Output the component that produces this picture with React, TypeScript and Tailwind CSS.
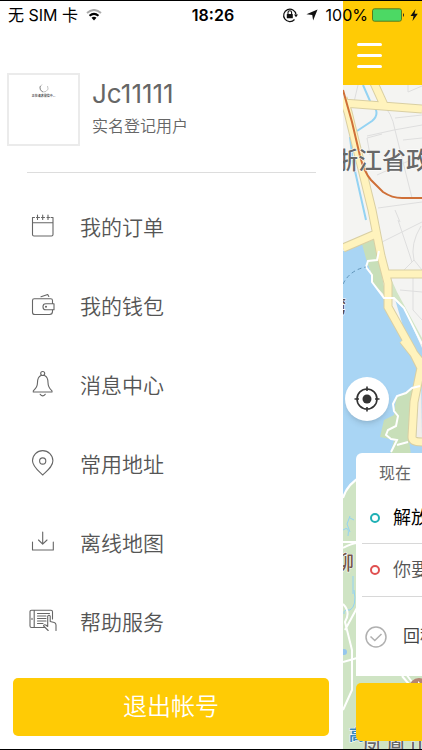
import React from 'react';

const ink = {
  fill: 'none',
  stroke: '#666666',
  strokeWidth: 1.1,
  strokeLinecap: 'round',
  strokeLinejoin: 'round',
} as const;

const CalendarIcon = () => (
  <svg viewBox="0 0 28 28" className="size-7" {...ink} aria-hidden="true">
    <path d="M5.500 5.500H3.500V22.500Q3.500 24 5 24H22.500Q24 24 24 22.500V5.500H22M3.500 10.800H24M8.500 3V7.500M13.700 3V7.500M19 3V7.500M7.500 5.500H10.500M12.500 5.500H15.500M18 5.500H20.500" />
  </svg>
);

const WalletIcon = () => (
  <svg viewBox="0 0 28 28" className="size-7" {...ink} aria-hidden="true">
    <path d="M23.500 12.500V9.500Q23.500 7.700 21.700 7.700H5.300Q3.500 7.700 3.500 9.500V21.200Q3.500 23.500 5.800 23.500H20.500Q23.500 23.500 23.500 20.500V19" />
    <path d="M25 12.700H16.800Q14 12.700 14 15.500V16Q14 18.800 16.800 18.800H25Z" />
    <path d="M12 5.800L18.700 3.500L19.800 5.500" />
    <circle cx="17" cy="15.700" r=".5" />
  </svg>
);

const BellIcon = () => (
  <svg viewBox="0 0 28 28" className="size-7" {...ink} aria-hidden="true">
    <circle cx="13.700" cy="3.500" r="2" />
    <path d="M12 5.500C9 6.800 8.500 9 8.500 12.500C8.500 17 6.800 18.700 4.300 20.800V22H23V20.800C20.500 18.700 19 17 19 12.500C19 9 18.500 6.800 15.500 5.500M11.200 24.300Q13.700 27.500 16.200 24.300" />
  </svg>
);

const PinIcon = () => (
  <svg viewBox="0 0 28 28" className="size-7" {...ink} aria-hidden="true">
    <path d="M13.700 26C9 21.500 3.500 17.500 3.500 11.800A10.200 10.200 0 0 1 23.900 11.800C23.900 17.500 18.500 21.500 13.700 26Z" />
    <circle cx="13.700" cy="12" r="3.100" />
  </svg>
);

const DownloadIcon = () => (
  <svg viewBox="0 0 28 28" className="size-7" {...ink} aria-hidden="true">
    <path d="M13.700 4V16M9.500 12L13.700 16.200L18 12M3.500 14V22H24.300V14" />
  </svg>
);

const HelpIcon = () => (
  <svg viewBox="0 0 28 28" className="size-7" {...ink} aria-hidden="true">
    <path d="M15.500 20.500H2.500Q1 20.500 1 19V4.800Q1 3.300 2.500 3.300H22Q23.500 3.300 23.500 4.800V12M5.200 3.500V20.300M3 11.200V12.500M8.500 6.500H20.500M8.500 9H17M8.500 11.500H17M8.500 14H17M8.500 16.500H14" />
    <path d="M19.200 23.500L14.500 18.800Q15.500 17 17.500 18.500L18.700 19.500V9Q20 7.500 21.200 9V14.500L25.200 15.500Q27 16 27 18V23.500" fill="#ffffff" />
  </svg>
);

const menuItems = [
  { label: '我的订单', Icon: CalendarIcon },
  { label: '我的钱包', Icon: WalletIcon },
  { label: '消息中心', Icon: BellIcon },
  { label: '常用地址', Icon: PinIcon },
  { label: '离线地图', Icon: DownloadIcon },
  { label: '帮助服务', Icon: HelpIcon },
];

const StatusBar = () => (
  <div className="absolute inset-x-0 top-0 z-20 grid h-7 grid-cols-3 items-center pr-1 pl-2 text-base text-black">
    <div className="flex items-center gap-2 whitespace-nowrap">
      <span>无 SIM 卡</span>
      <svg viewBox="0 0 16 12" className="h-3 w-4" fill="none" strokeWidth="2" aria-hidden="true">
        <path d="M1 4Q8-2 15 4" stroke="#aaaaaa" />
        <path d="M3.500 6.800Q8 3 12.500 6.800" stroke="#000000" />
        <path d="M5.500 8.800Q8 6.800 10.500 8.800L8 11.500Z" fill="#000000" />
      </svg>
    </div>
    <span className="text-center font-semibold">18:26</span>
    <div className="flex items-center justify-end gap-1">
      <svg viewBox="0 0 16 16" className="mr-1 size-4 shrink-0" fill="none" stroke="#111111" aria-hidden="true">
        <path d="M12.500 12.500A6.200 6.200 0 1 1 14 7.500" strokeWidth="1.200" />
        <path d="M12 7.500H16L14 10.200Z" fill="#111111" stroke="none" />
        <rect x="4.800" y="7" width="6" height="4.300" rx=".5" fill="#111111" stroke="none" />
        <path d="M6 7V5.500A1.800 1.800 0 0 1 9.600 5.500V7" strokeWidth="1.100" />
      </svg>
      <svg viewBox="0 0 14 14" className="mr-1 size-3 shrink-0" aria-hidden="true">
        <path d="M13.500 .5L8.300 13.500L7.300 7L.5 6Z" fill="#111111" />
      </svg>
      <span>100%</span>
      <svg viewBox="0 0 34 14" className="h-3.5 w-[34px] shrink-0" aria-hidden="true">
        <rect x=".5" y=".8" width="29" height="12.400" rx="2" fill="#4cd964" stroke="#5b7a1c" />
        <path d="M31 5Q33 7 31 9Z" fill="#222222" />
      </svg>
      <svg viewBox="0 0 8 14" className="h-3.5 w-2 shrink-0" aria-hidden="true">
        <path d="M5.500 1L.5 8H3.500L2.500 13L7.800 5.800H4.500Z" fill="#111111" />
      </svg>
    </div>
  </div>
);

// Streets around the lake, drawn bottom to top: land, water, parks, roads, labels
const CityMap = () => (
  <svg
    viewBox="343 85 79 664"
    preserveAspectRatio="xMinYMin slice"
    className="absolute inset-0 size-full"
    aria-hidden="true"
  >
    <rect x="343" y="85" width="79" height="664" fill="#f4f4f2" />
    <g fill="none" stroke="#dedede" strokeWidth="1">
      <path d="M358 85L354 102M381 103Q392 112 395 130L412 198M367 136L394 130L422 125M370 155L367 138L382 134M395 118L422 115M377 175L422 155M378 208L422 202M395 210L400 222M408 85V92L422 86M403 140L422 138" />
      <path d="M382 242L422 222M398 220L412 262M421 226Q410 244 414 260L422 270M414 260L402 272M413 276V310L422 320M400 290L422 292" />
    </g>

    <path d="M343 251L363 244L368 262L374 284L386 300L422 375V500H343Z" fill="#a9d5f4" />
    <path d="M362 244L375 239L380 265L386 297L372 282L371 272L367 262Z" fill="#c8dfb9" />
    <path d="M388 272L392 297L402 306L422 345V338L397 292Z" fill="#d2e5c6" />
    <path d="M395 299L404 308L422 348V362L404 330Z" fill="#a9d5f4" />
    <path d="M421 365L418 400L416 439H422Z" fill="#f1eeea" />
    <path d="M396 398L405 392L414 389L409 440L411 455H390L394 440L380 437L384 420L394 415Z" fill="#c8dfb9" />
    <path d="M343 498Q347 484 362 476V749H343Z" fill="#cfe4c4" />
    <path d="M343 670H422V749H343Z" fill="#cfe4c4" />

    <g fill="none" stroke="#94d3f3" strokeWidth="2">
      <path d="M363 85L370 101L376 110Q378 116 372 121L357 131M350 137L353 162L366 220M371 220L375 240" />
      <path d="M350 516L347 524L350 532M350 518L354 520M343 530Q350 525 348 536M354 590Q357 606 350 610Q343 609 344 614M353 576V594" strokeWidth="1" />
    </g>
    <circle cx="344" cy="652" r="3" fill="#95c6ed" />

    <g fill="none" stroke="#d9cfa3" strokeWidth="9">
      <path d="M343 103L422 109M374 83L384 105M343 98L348 112L372 210L381 256L388 283V307L412 350L421 368L414 402L412 437Q412 442 422 442M343 248L378 233M387 274H422M403 340L422 364" />
    </g>
    <g fill="none" stroke="#fff3bd" strokeWidth="7">
      <path d="M343 103L422 109M374 83L384 105M343 98L348 112L372 210L381 256L388 283V307L412 350L421 368L414 402L412 437Q412 442 422 442M343 248L378 233M387 274H422M403 340L422 364" />
    </g>
    <path d="M343 90L352 122L360 156Q364 172 371 180L383 192Q392 198 402 198H422" fill="none" stroke="#cf7038" strokeWidth="2" />

    <g fill="none" stroke="#ffffff" strokeWidth="2">
      <path d="M379 251L377 260L368 261L366 267L372 275V282L384 298H394L404 308L422 344" />
      <path d="M420 386L412 388L406 393L397 396L393 404L394 411L398 416L396 426L388 430L386 435L391 439L397 440L391 452M397 445L408 442" />
      <path d="M343 498Q347 484 362 476M343 542H357M343 548Q352 543 358 543M343 604Q351 612 345 622L352 650V690L343 710M343 662L357 658M345 630L358 606M402 676L414 690M406 674L418 690" />
    </g>
    <path d="M343 284Q350 270 366 267" fill="none" stroke="#6195ba" strokeDasharray="4 3" />
    <circle cx="419" cy="688" r="10" fill="#b48573" />
    <path d="M418 681L423 686L418 689Z" fill="#ffffff" />

    <g stroke="#ffffff" strokeWidth="1" paintOrder="stroke">
      <text x="334" y="169" fontSize="24" fontWeight="500" fill="#686868">浙江省政</text>
      <text x="328" y="313" fontSize="18" fontWeight="500" fill="#5c4b48">湾</text>
      <text x="334" y="570" fontSize="20" fontWeight="500" fill="#745749">柳</text>
      <text x="349" y="740" fontSize="15" fontWeight="700" fill="#3688bd">高</text>
      <text x="362 386 410" y="755" fontSize="20" fontWeight="500" fill="#686868">凤凰山</text>
    </g>
  </svg>
);

const Drawer = () => (
  <aside className="flex min-w-0 flex-1 flex-col bg-white pt-[72px] pb-[13px] text-[#666666]">
    <header className="flex gap-3 pl-[7px]">
      <div className="flex size-[73px] shrink-0 flex-col items-center border-2 border-[#ebebeb] pt-2">
        <svg viewBox="0 0 10 10" className="size-2.5" fill="none" strokeWidth=".7" aria-hidden="true">
          <path d="M3 1.500A4 4 0 1 0 8.500 3" stroke="#aaaaaa" />
          <path d="M1.500 3A4 4 0 0 0 4 8.800" stroke="#777777" />
        </svg>
        <span className="text-[3px] leading-[6px] text-black">正在请求微信中...</span>
      </div>
      <div className="pt-[5px]">
        <h1 className="text-[26px] leading-8 font-normal">Jc11111</h1>
        <p className="mt-1 text-base leading-6 font-[350]">实名登记用户</p>
      </div>
    </header>

    <hr className="mt-[26px] mr-[27px] ml-[27px] border-[#dddddd]" />

    <nav className="mt-[15px]">
      <ul>
        {menuItems.map(({ label, Icon }) => (
          <li key={label}>
            <a href="#" className="flex h-[79px] items-center gap-[23px] pl-[29px] text-[21px] text-[#555555]">
              <span className="pb-1">
                <Icon />
              </span>
              <span className="font-[350]">{label}</span>
            </a>
          </li>
        ))}
      </ul>
    </nav>

    <button
      type="button"
      className="mt-auto mr-[14px] ml-[13px] h-[58px] rounded-[5px] bg-[#ffcb05] text-2xl font-[350] text-white"
    >
      退出帐号
    </button>
  </aside>
);

const BookingCard = () => (
  <section className="w-80 rounded-t-md bg-white pl-[6px] text-lg">
    <div className="flex h-10 items-center pl-[17px] text-base text-[#666666]">现在</div>
    <button type="button" className="flex h-[51px] w-full items-center gap-[13px] border-b border-[#d8d8d8] pl-2 text-black">
      <span className="size-2.5 rounded-full border-2 border-[#1fb0b5]" />
      解放
    </button>
    <button type="button" className="flex h-[53px] w-full items-center gap-[13px] border-b border-[#d8d8d8] pl-2 font-[350] text-[#555555]">
      <span className="size-2.5 rounded-full border-2 border-[#e05050]" />
      你要
    </button>
    <button type="button" className="flex h-[79px] w-full items-center gap-4 pl-[3px] text-[17px] text-[#444444]">
      <svg viewBox="0 0 22 22" className="size-[22px]" fill="none" stroke="#b0b0b0" strokeWidth="1.500" aria-hidden="true">
        <circle cx="11" cy="11" r="10" />
        <path d="M5.500 10.500L9.800 14.500L16.500 8" />
      </svg>
      回程
    </button>
  </section>
);

const MapPane = () => (
  <main className="flex w-[79px] shrink-0 flex-col overflow-hidden">
    <header className="h-[84px] shrink-0 bg-[#ffcb05] pt-[38px] pl-3">
      <button type="button" aria-label="菜单" className="flex h-8 w-7 flex-col items-center justify-center gap-2">
        <span className="h-[3px] w-[25px] rounded-full bg-white" />
        <span className="h-[3px] w-[25px] rounded-full bg-white" />
        <span className="h-[3px] w-[25px] rounded-full bg-white" />
      </button>
    </header>
    <div className="relative flex flex-1 flex-col overflow-hidden">
      <CityMap />
      <div className="relative mt-auto pb-2">
        <button
          type="button"
          aria-label="定位"
          className="mb-8 ml-[2px] flex size-11 items-center justify-center rounded-full bg-white shadow-md"
        >
          <svg viewBox="0 0 26 26" className="size-[26px]" fill="none" stroke="#333333" strokeWidth="1.600" aria-hidden="true">
            <circle cx="13" cy="13" r="10" />
            <circle cx="13" cy="13" r="4.500" fill="#333333" stroke="none" />
            <path d="M13 .5V5M13 21V25.500M.5 13H5M21 13H25.500" />
          </svg>
        </button>
        <div className="flex flex-col gap-[7px] pl-[13px]">
          <BookingCard />
          <button type="button" aria-label="确认" className="h-[58px] w-80 rounded-[5px] bg-[#ffcb05]" />
        </div>
      </div>
    </div>
  </main>
);

const App: React.FC = () => {
  return (
    <div className="relative flex min-h-screen overflow-hidden border-y border-black bg-white font-[Inter,'Noto_Sans_CJK_SC',sans-serif]">
      <StatusBar />
      <Drawer />
      <MapPane />
    </div>
  );
};

export default App;
